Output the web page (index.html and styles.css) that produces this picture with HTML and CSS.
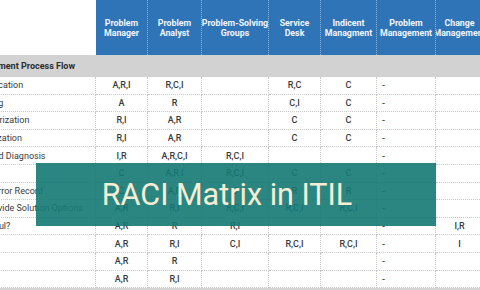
FILE: index.html
```html
<!DOCTYPE html>
<html>
<head>
<meta charset="utf-8">
<link rel="stylesheet" href="styles.css">
</head>
<body>
<div class="page">
  <div class="sheet">
    <div class="row head">
      <div class="cell label blank"></div>
      <div class="cell hc">Problem<br>Manager</div>
      <div class="cell hc">Problem<br>Analyst</div>
      <div class="cell hc">Problem-Solving<br>Groups</div>
      <div class="cell hc">Service<br>Desk</div>
      <div class="cell hc">Indicent<br>Managment</div>
      <div class="cell hc">Problem<br>Management</div>
      <div class="cell hc">Change<br>Management</div>
    </div>
    <div class="row section">
      <div class="cell label">Problem Management Process Flow</div>
    </div>
    <div class="row data"><div class="cell label">Problem Identification</div><div class="cell">A,R,I</div><div class="cell">R,C,I</div><div class="cell"></div><div class="cell">R,C</div><div class="cell">C</div><div class="cell left">-</div><div class="cell"></div></div>
    <div class="row data"><div class="cell label">Problem Logging</div><div class="cell">A</div><div class="cell">R</div><div class="cell"></div><div class="cell">C,I</div><div class="cell">C</div><div class="cell left">-</div><div class="cell"></div></div>
    <div class="row data"><div class="cell label">Problem Categorization</div><div class="cell">R,I</div><div class="cell">A,R</div><div class="cell"></div><div class="cell">C</div><div class="cell">C</div><div class="cell left">-</div><div class="cell"></div></div>
    <div class="row data"><div class="cell label">Problem Prioritization</div><div class="cell">R,I</div><div class="cell">A,R</div><div class="cell"></div><div class="cell">C</div><div class="cell">C</div><div class="cell left">-</div><div class="cell"></div></div>
    <div class="row data"><div class="cell label">Investigation and Diagnosis</div><div class="cell">I,R</div><div class="cell">A,R,C,I</div><div class="cell">R,C,I</div><div class="cell"></div><div class="cell"></div><div class="cell left">-</div><div class="cell"></div></div>
    <div class="row data"><div class="cell label">Workaround?</div><div class="cell">C</div><div class="cell">A,R,I</div><div class="cell">R,C,I</div><div class="cell">C</div><div class="cell">C</div><div class="cell left">-</div><div class="cell"></div></div>
    <div class="row data"><div class="cell label">Create Known Error Record</div><div class="cell">C</div><div class="cell">A,R</div><div class="cell">C</div><div class="cell">R</div><div class="cell">R</div><div class="cell left">-</div><div class="cell"></div></div>
    <div class="row data"><div class="cell label">Identify and Provide Solution Options</div><div class="cell">A,R</div><div class="cell">R,I</div><div class="cell">R,C,I</div><div class="cell">R,C,I</div><div class="cell">R,C,I</div><div class="cell left">-</div><div class="cell"></div></div>
    <div class="row data"><div class="cell label">Was it Successful?</div><div class="cell">A,R</div><div class="cell">R</div><div class="cell">R,I</div><div class="cell"></div><div class="cell"></div><div class="cell left">-</div><div class="cell">I,R</div></div>
    <div class="row data"><div class="cell label">Closure</div><div class="cell">A,R</div><div class="cell">R,I</div><div class="cell">C,I</div><div class="cell">R,C,I</div><div class="cell">R,C,I</div><div class="cell left">-</div><div class="cell">I</div></div>
    <div class="row data"><div class="cell label">Review</div><div class="cell">A,R</div><div class="cell">R</div><div class="cell"></div><div class="cell"></div><div class="cell"></div><div class="cell left">-</div><div class="cell"></div></div>
    <div class="row data"><div class="cell label">Close</div><div class="cell">A,R</div><div class="cell">R,I</div><div class="cell"></div><div class="cell"></div><div class="cell"></div><div class="cell left">-</div><div class="cell"></div></div>
    <div class="scrollbar"></div>
  </div>
  <div class="banner">RACI Matrix in ITIL</div>
</div>
</body>
</html>
```

FILE: styles.css
```css
html, body {
  margin: 0;
  padding: 0;
  background: #ffffff;
}
.page {
  position: relative;
  width: 480px;
  height: 290px;
  overflow: hidden;
  font-family: Roboto, "Liberation Sans", sans-serif;
}
.sheet {
  margin-left: -66px;
  width: 610px;
}
.row {
  display: grid;
  grid-template-columns: 162px 52px 54px 67px 52px 56px 59px 48px;
}
.cell {
  box-sizing: border-box;
  display: flex;
  align-items: center;
  justify-content: center;
  font-size: 9px;
  font-weight: 500;
  color: #3a3a3a;
  white-space: nowrap;
  overflow: hidden;
}
.head {
  height: 55px;
}
.hc {
  background: #2f74b7;
  color: #f2f6fb;
  font-weight: 700;
  font-size: 8.8px;
  text-align: center;
  line-height: 10px;
  border-right: 1px dotted #8fb3dc;
}
.blank {
  background: #ffffff;
}
.section {
  height: 22px;
  background: #d2d2d2;
  grid-template-columns: 1fr;
}
.section .label {
  font-weight: 700;
  color: #2e2e2e;
  font-size: 9px;
  padding-left: 0;
  text-indent: -5px;
}
.label {
  justify-content: flex-start;
  padding-left: 1px;
  font-weight: 400;
}
.data {
  height: 17.6px;
}
.data .cell {
  border-right: 1px dotted #c9c9c9;
  border-bottom: 1px dotted #c9c9c9;
}
.data .left {
  justify-content: flex-start;
  padding-left: 5px;
}
.scrollbar {
  height: 4px;
  background: #d4d4d4;
}
.banner {
  position: absolute;
  left: 36px;
  top: 163px;
  width: 400px;
  height: 63px;
  background: rgba(20, 121, 116, 0.9);
  color: #f7edd2;
  font-family: Roboto, "Liberation Sans", sans-serif;
  font-size: 30.5px;
  display: flex;
  align-items: center;
  justify-content: center;
  padding-right: 18px;
  box-sizing: border-box;
}
```
